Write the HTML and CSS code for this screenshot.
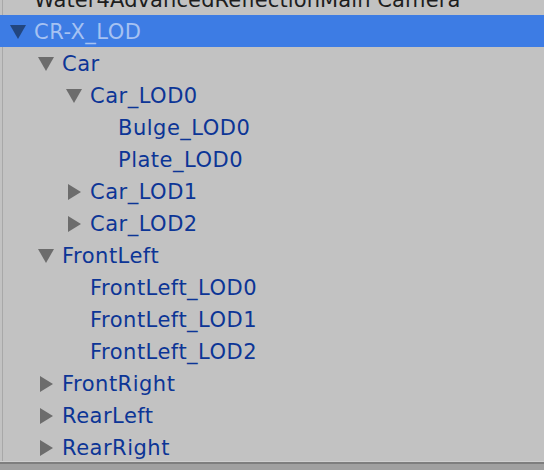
FILE: index.html
```html
<!DOCTYPE html>
<html>
<head>
<meta charset="utf-8">
<link rel="stylesheet" href="styles.css">
</head>
<body>
<div class="panel">
  <div class="tree">
    <div class="row lvl0"><span class="arrow"></span><span class="label plain">Water4AdvancedReflectionMain Camera</span></div>
    <div class="row lvl0 selected"><span class="arrow"><svg viewBox="0 0 16 16" width="16" height="16"><polygon points="0,1 16,1 8,15" class="tri-sel"/></svg></span><span class="label">CR-X_LOD</span></div>
    <div class="row lvl1"><span class="arrow"><svg viewBox="0 0 16 16" width="16" height="16"><polygon points="0,1 16,1 8,15" class="tri"/></svg></span><span class="label">Car</span></div>
    <div class="row lvl2"><span class="arrow"><svg viewBox="0 0 16 16" width="16" height="16"><polygon points="0,1 16,1 8,15" class="tri"/></svg></span><span class="label">Car_LOD0</span></div>
    <div class="row lvl3"><span class="arrow"></span><span class="label">Bulge_LOD0</span></div>
    <div class="row lvl3"><span class="arrow"></span><span class="label">Plate_LOD0</span></div>
    <div class="row lvl2"><span class="arrow"><svg viewBox="0 0 16 16" width="16" height="16"><polygon points="2,0 15,8 2,16" class="tri"/></svg></span><span class="label">Car_LOD1</span></div>
    <div class="row lvl2"><span class="arrow"><svg viewBox="0 0 16 16" width="16" height="16"><polygon points="2,0 15,8 2,16" class="tri"/></svg></span><span class="label">Car_LOD2</span></div>
    <div class="row lvl1"><span class="arrow"><svg viewBox="0 0 16 16" width="16" height="16"><polygon points="0,1 16,1 8,15" class="tri"/></svg></span><span class="label">FrontLeft</span></div>
    <div class="row lvl2"><span class="arrow"></span><span class="label">FrontLeft_LOD0</span></div>
    <div class="row lvl2"><span class="arrow"></span><span class="label">FrontLeft_LOD1</span></div>
    <div class="row lvl2"><span class="arrow"></span><span class="label">FrontLeft_LOD2</span></div>
    <div class="row lvl1"><span class="arrow"><svg viewBox="0 0 16 16" width="16" height="16"><polygon points="2,0 15,8 2,16" class="tri"/></svg></span><span class="label">FrontRight</span></div>
    <div class="row lvl1"><span class="arrow"><svg viewBox="0 0 16 16" width="16" height="16"><polygon points="2,0 15,8 2,16" class="tri"/></svg></span><span class="label">RearLeft</span></div>
    <div class="row lvl1"><span class="arrow"><svg viewBox="0 0 16 16" width="16" height="16"><polygon points="2,0 15,8 2,16" class="tri"/></svg></span><span class="label">RearRight</span></div>
  </div>
</div>
<div class="footer"></div>
</body>
</html>
```

FILE: styles.css
```css
html, body {
  margin: 0;
  padding: 0;
  background: #a0a0a0;
  font-family: "DejaVu Sans", "Liberation Sans", sans-serif;
}
.panel {
  height: 461px;
  overflow: hidden;
  background: linear-gradient(to right, #c2c2c2 2px, #a8a8a8 2px, #a8a8a8 3px, #c2c2c2 3px);
}
.tree {
  margin-top: -17px;
  display: flex;
  flex-direction: column;
}
.row {
  height: 32px;
  display: flex;
  align-items: center;
  gap: 8px;
  font-size: 21px;
  letter-spacing: 0.5px;
  white-space: nowrap;
}
.lvl0 { padding-left: 10px; }
.lvl1 { padding-left: 38px; }
.lvl2 { padding-left: 66px; }
.lvl3 { padding-left: 94px; }
.arrow {
  width: 16px;
  height: 16px;
  flex: none;
  display: flex;
  margin-top: 2px;
}
.label {
  color: #0c3596;
  line-height: 30px;
  padding-top: 2px;
}
.label.plain {
  color: #1e1e1e;
  letter-spacing: 0.1px;
}
.selected { background: #3d7ce4; }
.selected .label { color: #a6c2f2; }
.tri { fill: #6c6c6c; }
.tri-sel { fill: #22467f; }
.footer {
  border-top: 1px solid #cfcfcf;
  height: 2px;
  background: #7e7e7e;
}
```
